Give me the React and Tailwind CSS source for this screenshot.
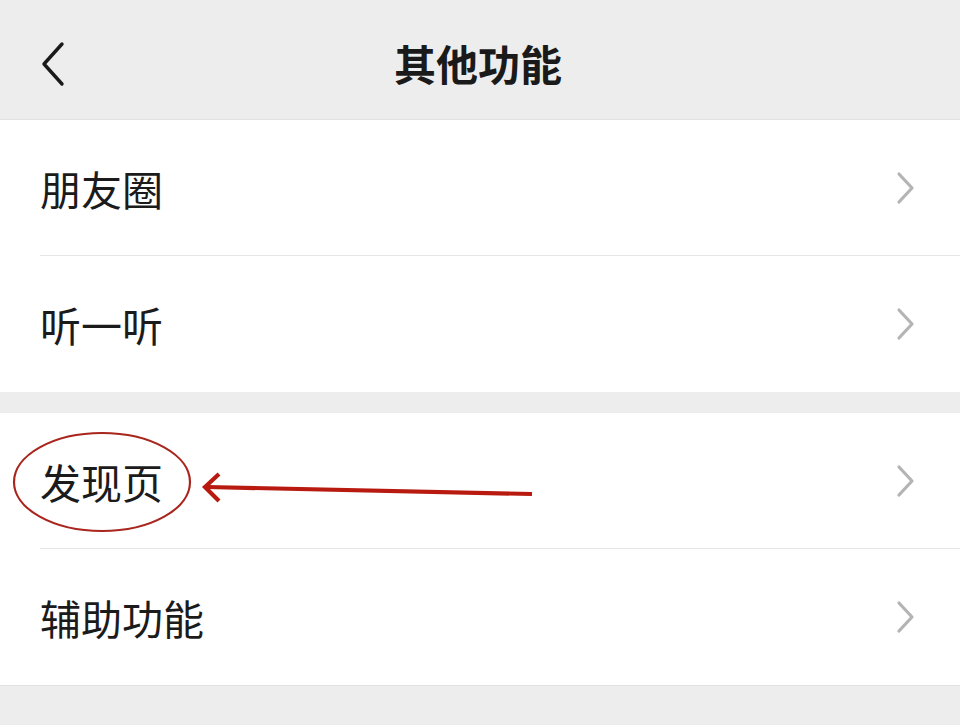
import React from "react";

const font = { fontFamily: '"Noto Sans CJK SC", "Noto Sans", sans-serif' };

function Chevron() {
  return (
    <svg width="24" height="36" viewBox="0 0 24 36" className="shrink-0">
      <path d="M5 4 L18 18 L5 32" fill="none" stroke="#b4b4b4" strokeWidth="3.2" strokeLinecap="round" strokeLinejoin="round" />
    </svg>
  );
}

function Row({ label, divider }) {
  return (
    <div className="relative h-[136px] flex items-center justify-between pl-[40px] pr-[42px] bg-white">
      <span className="text-[41px] leading-none text-[#1b1b1b]">{label}</span>
      <Chevron />
      {divider && <div className="absolute left-[40px] right-0 bottom-0 h-px bg-[#e6e6e6]" />}
    </div>
  );
}

export default function App() {
  return (
    <div className="relative w-[960px] h-[725px] bg-[#ededed] overflow-hidden" style={font}>
      <div className="relative h-[120px] flex items-center justify-center border-b border-[#e2e2e2]">
        <svg width="30" height="46" viewBox="0 0 30 46" className="absolute left-[38px] top-[41px]">
          <path d="M24 3 L6 23 L24 43" fill="none" stroke="#1a1a1a" strokeWidth="3.4" strokeLinecap="round" strokeLinejoin="round" />
        </svg>
        <span className="text-[42px] font-semibold leading-none text-[#1a1a1a] mt-[6px] ml-[-4px]">其他功能</span>
      </div>
      <div>
        <Row label="朋友圈" divider />
        <Row label="听一听" />
      </div>
      <div className="h-[21px]" />
      <div className="border-b border-[#e2e2e2]">
        <Row label="发现页" divider />
        <Row label="辅助功能" />
      </div>
      <svg className="absolute left-0 top-0 pointer-events-none" width="960" height="725">
        <ellipse cx="102" cy="482" rx="88" ry="49" fill="none" stroke="#a8261d" strokeWidth="2.2" />
        <line x1="532" y1="494" x2="207" y2="487" stroke="#b81a10" strokeWidth="4.2" strokeLinecap="butt" />
        <path d="M219 474 L205 487 L219 501" fill="none" stroke="#b81a10" strokeWidth="4.2" />
      </svg>
    </div>
  );
}
